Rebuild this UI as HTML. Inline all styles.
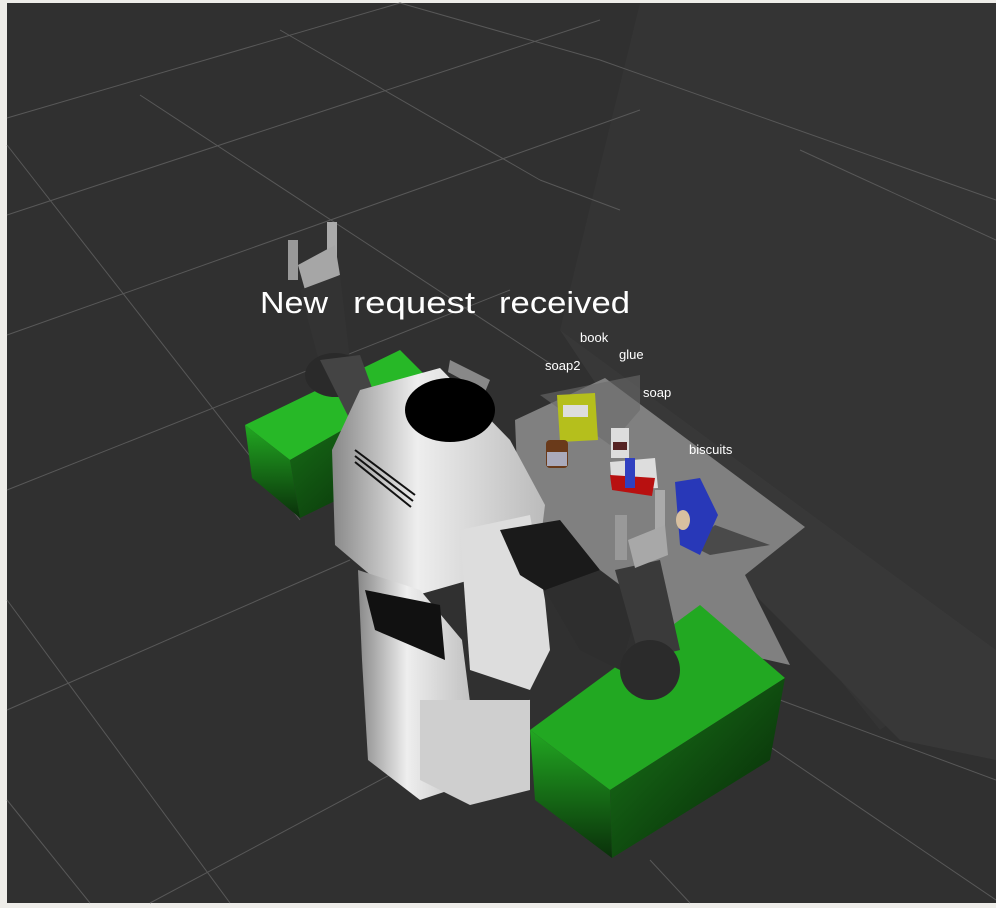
<!DOCTYPE html>
<html><head><style>
html,body{margin:0;padding:0;background:#f0efeb;}
.wrap{position:relative;width:996px;height:908px;overflow:hidden;background:#eeede9}
svg{position:absolute;left:0;top:0}
text{font-family:"Liberation Sans",sans-serif;fill:#fff}
</style></head><body><div class="wrap">
<svg width="996" height="908" viewBox="0 0 996 908">
<defs>
<linearGradient id="g1" x1="0" y1="0" x2="0" y2="1"><stop offset="0" stop-color="#22a822"/><stop offset="1" stop-color="#0a300a"/></linearGradient>
<linearGradient id="g2" x1="0" y1="0" x2="1" y2="1"><stop offset="0" stop-color="#1a7a1a"/><stop offset="1" stop-color="#052005"/></linearGradient>
<linearGradient id="w1" x1="0" y1="0" x2="1" y2="0"><stop offset="0" stop-color="#888"/><stop offset=".4" stop-color="#eee"/><stop offset="1" stop-color="#bbb"/></linearGradient>
</defs>
<rect x="7" y="3" width="989" height="900" fill="#303030"/>
<polygon points="640,3 996,3 996,650 880,730 560,330" fill="#343434"/>
<polygon points="560,330 996,650 996,760 900,740 700,540" fill="#383838"/>
<g stroke="#585858" stroke-width="1" fill="none">
<line x1="7" y1="118" x2="400" y2="3"/>
<line x1="7" y1="215" x2="600" y2="20"/>
<line x1="7" y1="335" x2="640" y2="110"/>
<line x1="7" y1="490" x2="510" y2="290"/>
<line x1="7" y1="710" x2="350" y2="560"/>
<line x1="140" y1="95" x2="560" y2="370"/>
<line x1="7" y1="145" x2="300" y2="520"/>
<line x1="7" y1="600" x2="230" y2="903"/>
<line x1="90" y1="903" x2="7" y2="800"/>
<line x1="400" y1="3" x2="600" y2="60"/>
<line x1="600" y1="60" x2="996" y2="200"/>
<line x1="280" y1="30" x2="540" y2="180"/>
<line x1="540" y1="180" x2="620" y2="210"/>
<line x1="150" y1="903" x2="530" y2="700"/>
<line x1="780" y1="700" x2="996" y2="780"/>
<line x1="760" y1="740" x2="996" y2="900"/>
<line x1="650" y1="860" x2="690" y2="903"/>
<line x1="800" y1="150" x2="996" y2="240"/>
</g>
<polygon points="605,378 805,527 745,575 790,665 680,640 520,540 515,420" fill="#808080"/>
<polygon points="540,395 640,375 640,410 610,445" fill="#6a6a6a" opacity=".6"/>
<polygon points="690,545 715,525 770,545 710,555" fill="#333" opacity=".7"/>
<polygon points="245,425 400,350 430,380 290,460" fill="#27b827"/>
<polygon points="245,425 290,460 300,518 252,478" fill="url(#g1)"/>
<polygon points="290,460 430,380 440,450 300,518" fill="url(#g2)"/>
<polygon points="530,730 700,605 785,678 610,790" fill="#22a822"/>
<polygon points="530,730 610,790 612,858 535,800" fill="url(#g1)"/>
<polygon points="610,790 785,678 770,760 612,858" fill="url(#g2)"/>
<rect x="288" y="240" width="10" height="40" fill="#999"/>
<rect x="327" y="222" width="10" height="40" fill="#aaa"/>
<polygon points="298,265 335,245 340,275 305,290" fill="#a6a6a6"/>
<polygon points="300,290 340,275 350,360 320,365" fill="#333"/>
<ellipse cx="335" cy="375" rx="30" ry="22" fill="#2a2a2a"/>
<polygon points="320,360 360,355 380,410 350,420" fill="#444"/>
<polygon points="450,360 490,380 485,392 448,372" fill="#888"/>
<polygon points="360,390 440,368 510,440 545,505 540,545 470,580 400,600 335,545 332,450" fill="url(#w1)"/>
<ellipse cx="450" cy="410" rx="45" ry="32" fill="#000"/>
<g stroke="#111" stroke-width="2"><line x1="355" y1="450" x2="415" y2="495"/><line x1="355" y1="456" x2="413" y2="501"/><line x1="355" y1="462" x2="411" y2="507"/></g>
<polygon points="358,570 420,590 462,640 480,780 420,800 368,760 362,660" fill="url(#w1)"/>
<polygon points="365,590 440,605 445,660 375,630" fill="#111"/>
<polygon points="460,530 530,515 545,600 550,650 530,690 470,670" fill="#ddd"/>
<polygon points="500,530 560,520 600,570 560,600 520,575" fill="#1a1a1a"/>
<polygon points="420,700 530,700 530,790 470,805 420,780" fill="#cfcfcf"/>
<polygon points="545,590 600,570 640,600 620,670 580,650" fill="#2e2e2e"/>
<polygon points="615,570 660,560 680,650 640,660" fill="#3a3a3a"/>
<ellipse cx="650" cy="670" rx="30" ry="30" fill="#2b2b2b"/>
<rect x="615" y="515" width="12" height="45" fill="#999"/>
<rect x="655" y="490" width="10" height="45" fill="#aaa"/>
<polygon points="628,540 665,525 668,555 635,568" fill="#a8a8a8"/>
<polygon points="557,395 595,393 598,440 560,442" fill="#b5bf1c"/>
<rect x="563" y="405" width="25" height="12" fill="#ddd"/>
<rect x="546" y="440" width="22" height="28" rx="4" fill="#6a3a1a"/>
<rect x="547" y="452" width="20" height="14" fill="#aab"/>
<rect x="611" y="428" width="18" height="30" fill="#ddd"/>
<rect x="613" y="442" width="14" height="8" fill="#522"/>
<polygon points="610,462 655,458 658,488 612,490" fill="#ddd"/>
<polygon points="610,475 655,478 652,496 612,490" fill="#b81010"/>
<rect x="625" y="458" width="10" height="30" fill="#3040c0"/>
<polygon points="675,482 700,478 718,515 700,555 680,545" fill="#2838b8"/>
<ellipse cx="683" cy="520" rx="7" ry="10" fill="#d8c0a0"/>
<text x="260" y="313" font-size="31" textLength="68" lengthAdjust="spacingAndGlyphs">New</text>
<text x="353" y="313" font-size="31" textLength="122" lengthAdjust="spacingAndGlyphs">request</text>
<text x="499" y="313" font-size="31" textLength="131" lengthAdjust="spacingAndGlyphs">received</text>
<text x="580" y="342" font-size="13">book</text>
<text x="619" y="359" font-size="13">glue</text>
<text x="545" y="370" font-size="13">soap2</text>
<text x="643" y="397" font-size="13">soap</text>
<text x="689" y="454" font-size="13">biscuits</text>
</svg>
</div></body></html>
